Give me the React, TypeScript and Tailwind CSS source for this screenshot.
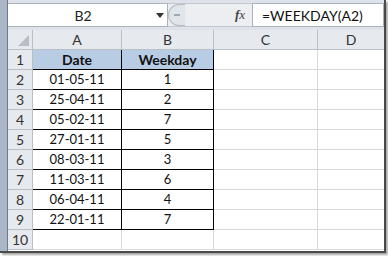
const rows: [string, string][] = [
  ["Date", "Weekday"],
  ["01-05-11", "1"],
  ["25-04-11", "2"],
  ["05-02-11", "7"],
  ["27-01-11", "5"],
  ["08-03-11", "3"],
  ["11-03-11", "6"],
  ["06-04-11", "4"],
  ["22-01-11", "7"],
  ["", ""],
];

const font = { fontFamily: "Lato, 'Open Sans', sans-serif" };

export default function App() {
  return (
    <div className="w-[388px] h-[256px] bg-white" style={font}>
      <div className="w-[386px] h-[253px] flex bg-[#d6dbe3] border-r-2 border-b-2 border-[#4a4a4a] shadow-[2px_2px_2px_rgba(0,0,0,0.35)]">
        {/* left window frame */}
        <div className="w-[8px] h-full bg-[#aab5c6] border-r border-[#6d7a8d]" />

        <div className="flex-1 flex flex-col">
          {/* formula bar */}
          <div className="h-[30px] pt-[3px] pb-[3px] flex bg-[#dfe3e9]">
            <div className="w-[160px] h-[24px] bg-white border border-[#a9b2bf] border-l-0 flex items-center">
              <span className="flex-1 text-center text-[14px] text-[#222] pl-[2px]">B2</span>
              <svg width="8" height="5" viewBox="0 0 8 5" className="mr-[3px]">
                <path d="M0 0 H8 L4 5 Z" fill="#333" />
              </svg>
            </div>
            <div className="flex-1 flex items-center bg-[#eceef1] border-y border-[#c2c8d1]">
              <div className="w-[17px] h-[22px] rounded-l-full bg-[#e1e4e8] border border-[#b6bcc6] border-r-0 flex items-center pl-[5px]">
                <div className="w-[6px] h-[2px] bg-[#a3a9b2]" />
              </div>
              <div className="flex-1" />
              <span className="italic text-[13px] text-[#444] mr-[7px]" style={{ fontFamily: "'Liberation Serif', serif" }}>
                <b>f</b>x
              </span>
            </div>
            <div className="w-[132px] h-[24px] bg-white border border-[#a9b2bf] flex items-center pl-[9px] text-[14px] text-[#111]">
              =WEEKDAY(A2)
            </div>
          </div>

          {/* column headers */}
          <div className="h-[20px] flex text-[14px] text-[#333] bg-[#e6e9ed]">
            <div className="w-[25px] border-r border-b border-[#b9bfc8] relative">
              <svg width="11" height="11" viewBox="0 0 11 11" className="absolute right-[3px] bottom-[3px]">
                <path d="M11 0 V11 H0 Z" fill="#b9bec6" />
              </svg>
            </div>
            <div className="w-[89px] border-r border-b border-[#b9bfc8] flex items-center justify-center">A</div>
            <div className="w-[92px] border-r border-b border-[#b9bfc8] flex items-center justify-center">B</div>
            <div className="w-[104px] border-r border-b border-[#b9bfc8] flex items-center justify-center">C</div>
            <div className="flex-1 border-b border-[#b9bfc8] flex items-center justify-center">D</div>
          </div>

          {/* rows */}
          <div className="flex-1 bg-white">
            {rows.map((r, i) => {
              const inTable = i < 9;
              const head = i === 0;
              const cell = inTable
                ? `border-r border-b border-black flex items-center justify-center ${head ? "bg-[#b8cce4] font-bold text-[14px]" : "text-[13px]"}`
                : "border-r border-b border-[#d9d9d9]";
              return (
                <div key={i} className="h-[20px] flex text-[#111]">
                  <div className="w-[25px] bg-[#e6e9ed] border-r border-b border-[#b9bfc8] flex items-center justify-center text-[14px] text-[#333]">
                    {i + 1}
                  </div>
                  <div className={`w-[89px] ${cell}`}>{r[0]}</div>
                  <div className={`w-[92px] ${cell}`}>{r[1]}</div>
                  <div className="w-[104px] border-r border-b border-[#d9d9d9]" />
                  <div className="flex-1 border-b border-[#d9d9d9]" />
                </div>
              );
            })}
          </div>
        </div>
      </div>
    </div>
  );
}
